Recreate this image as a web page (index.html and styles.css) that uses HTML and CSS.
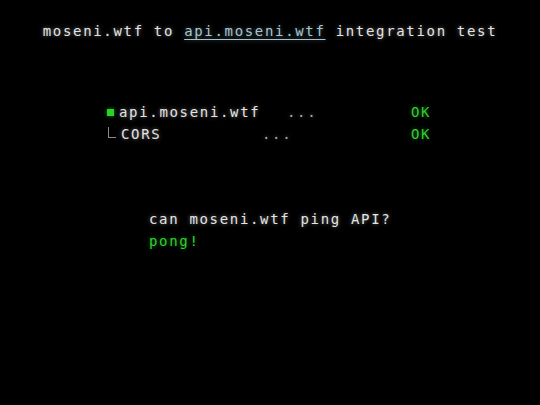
FILE: index.html
```html
<!DOCTYPE html>
<html>
<head>
<meta charset="utf-8">
<link rel="stylesheet" href="styles.css">
</head>
<body>
<div class="screen">
  <h1 class="title">moseni.wtf to <a class="link" href="#">api.moseni.wtf</a> integration test</h1>
  <div class="checks">
    <div class="row">
      <span class="mark mark-box"></span>
      <span class="name name-api">api.moseni.wtf</span>
      <span class="dots dots-api">...</span>
      <span class="ok">OK</span>
    </div>
    <div class="row">
      <span class="mark mark-tree"></span>
      <span class="name name-cors">CORS</span>
      <span class="dots dots-cors">...</span>
      <span class="ok">OK</span>
    </div>
  </div>
  <div class="ping">
    <div class="question">can moseni.wtf ping API?</div>
    <div class="answer">pong!</div>
  </div>
</div>
</body>
</html>
```
FILE: styles.css
```css
html, body {
  margin: 0;
  padding: 0;
  background: #000;
}
.screen {
  width: 540px;
  height: 405px;
  background: #000;
  font-family: "DejaVu Sans Mono", monospace;
  font-size: 14px;
  letter-spacing: 1.67px;
  color: #e4e4e4;
  text-shadow: 0 0 4px rgba(255, 255, 255, 0.45);
  overflow: hidden;
}
.title {
  margin: 0;
  padding-top: 21px;
  font-size: 14px;
  font-weight: normal;
  line-height: 20px;
  text-align: center;
}
.link {
  color: #a7c4cf;
  text-decoration: underline;
  text-underline-offset: 3px;
  text-shadow: 0 0 4px rgba(160, 200, 215, 0.45);
}
.checks {
  margin-top: 60px;
  padding-left: 107px;
}
.row {
  display: flex;
  align-items: center;
  height: 22px;
  line-height: 22px;
}
.mark {
  width: 12px;
  flex: none;
}
.mark-box::before {
  content: "";
  display: block;
  width: 7px;
  height: 7px;
  margin-left: 0;
  margin-top: 1px;
  background: #2bd12b;
  box-shadow: 0 0 4px rgba(43, 209, 43, 0.6);
}
.mark-tree::before {
  content: "";
  display: block;
  width: 7px;
  height: 10px;
  margin-left: 1px;
  margin-top: -4px;
  border-left: 1px solid #8a8a8a;
  border-bottom: 1px solid #8a8a8a;
}
.name-api {
  width: 168px;
}
.name-cors {
  width: 141px;
  padding-left: 2px;
}
.dots {
  color: #a8a8a8;
}
.dots-api {
  width: 124px;
}
.dots-cors {
  width: 149px;
}
.ok {
  color: #2fd02f;
  text-shadow: 0 0 4px rgba(46, 204, 46, 0.5);
}
.ping {
  margin-top: 63px;
  padding-left: 149px;
  line-height: 22px;
}
.answer {
  color: #2fd02f;
  text-shadow: 0 0 4px rgba(46, 204, 46, 0.5);
}
```
